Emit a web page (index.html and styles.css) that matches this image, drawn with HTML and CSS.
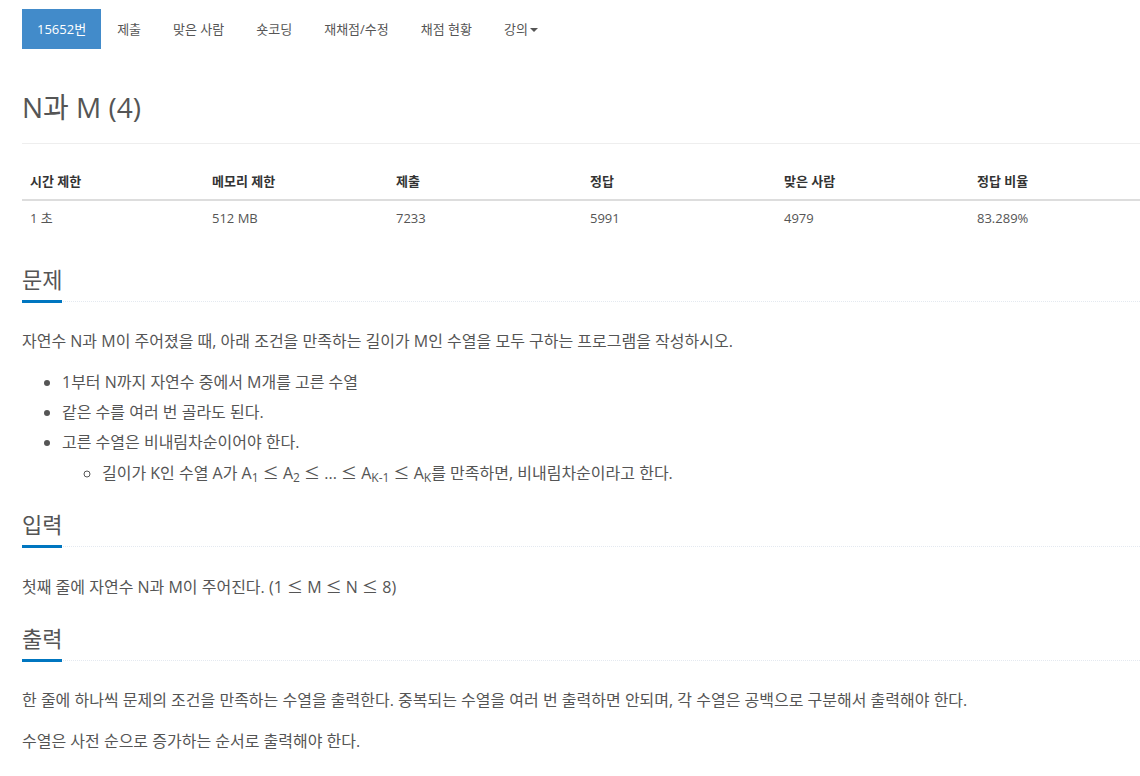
FILE: index.html
```html
<!DOCTYPE html>
<html lang="ko">
<head>
<meta charset="utf-8">
<title>N과 M (4)</title>
<link rel="stylesheet" href="styles.css">
</head>
<body>
<div class="page">
  <ul class="nav">
    <li class="nav-item active">15652번</li>
    <li class="nav-item">제출</li>
    <li class="nav-item">맞은 사람</li>
    <li class="nav-item">숏코딩</li>
    <li class="nav-item">재채점/수정</li>
    <li class="nav-item">채점 현황</li>
    <li class="nav-item">강의<span class="caret"></span></li>
  </ul>

  <h1 class="title">N과 M (4)</h1>
  <hr class="rule">

  <table class="info">
    <colgroup>
      <col class="c1"><col class="c2"><col class="c3"><col class="c4"><col class="c5"><col class="c6">
    </colgroup>
    <thead>
      <tr><th>시간 제한</th><th>메모리 제한</th><th>제출</th><th>정답</th><th>맞은 사람</th><th>정답 비율</th></tr>
    </thead>
    <tbody>
      <tr><td>1 초</td><td>512 MB</td><td>7233</td><td>5991</td><td>4979</td><td>83.289%</td></tr>
    </tbody>
  </table>

  <section class="section first">
    <div class="headline"><h2>문제</h2></div>
    <p>자연수 N과 M이 주어졌을 때, 아래 조건을 만족하는 길이가 M인 수열을 모두 구하는 프로그램을 작성하시오.</p>
    <ul class="list">
      <li>1부터 N까지 자연수 중에서 M개를 고른 수열</li>
      <li>같은 수를 여러 번 골라도 된다.</li>
      <li>고른 수열은 비내림차순이어야 한다.
        <ul class="sublist">
          <li>길이가 K인 수열 A가 A<sub>1</sub> <span class="op">≤</span> A<sub>2</sub> <span class="op">≤</span> ... <span class="op">≤</span> A<sub>K-1</sub> <span class="op">≤</span> A<sub>K</sub>를 만족하면, 비내림차순이라고 한다.</li>
        </ul>
      </li>
    </ul>
  </section>

  <section class="section">
    <div class="headline"><h2>입력</h2></div>
    <p>첫째 줄에 자연수 N과 M이 주어진다. (1 <span class="op">≤</span> M <span class="op">≤</span> N <span class="op">≤</span> 8)</p>
  </section>

  <section class="section">
    <div class="headline"><h2>출력</h2></div>
    <p>한 줄에 하나씩 문제의 조건을 만족하는 수열을 출력한다. 중복되는 수열을 여러 번 출력하면 안되며, 각 수열은 공백으로 구분해서 출력해야 한다.</p>
    <p>수열은 사전 순으로 증가하는 순서로 출력해야 한다.</p>
  </section>
</div>
</body>
</html>
```

FILE: styles.css
```css
html, body {
  margin: 0;
  padding: 0;
  background: #fff;
}

body {
  font-family: "Open Sans", "Noto Sans CJK KR", sans-serif;
  color: #555;
  font-size: 13px;
}

.page {
  padding-left: 22px;
  overflow: hidden;
}

.nav {
  list-style: none;
  margin: 9px 0 0 0;
  padding: 0;
  display: flex;
}

.nav-item {
  height: 40px;
  line-height: 40px;
  padding: 0 16px;
  font-size: 13px;
  color: #555;
  display: flex;
  align-items: center;
}

.nav-item.active {
  background: #428bca;
  color: #fff;
  padding: 0 15px;
}

.caret {
  display: inline-block;
  width: 0;
  height: 0;
  margin-left: 2px;
  margin-top: 2px;
  border-top: 4px solid #555;
  border-left: 4px solid transparent;
  border-right: 4px solid transparent;
}

.title {
  font-size: 28px;
  font-weight: 400;
  line-height: 36px;
  margin: 40px 0 0 0;
  color: #555;
}

.rule {
  border: 0;
  border-top: 1px solid #eee;
  margin: 18px 0 20px 0;
}

.info {
  width: 1118px;
  table-layout: fixed;
  border-collapse: collapse;
  font-size: 13px;
  line-height: 1.42857;
}

.c1 { width: 182px; }
.c2 { width: 184px; }
.c3 { width: 194px; }
.c4 { width: 194px; }
.c5 { width: 193px; }
.c6 { width: 171px; }

.info th {
  text-align: left;
  font-weight: 700;
  color: #333;
  padding: 8px;
  border-bottom: 2px solid #ddd;
}

.info td {
  padding: 8px;
  color: #555;
}

.section {
  padding-top: 11px;
}

.section.first {
  padding-top: 30px;
}

.headline {
  border-bottom: 1px dotted #e4e9f0;
  margin-bottom: 24px;
}

.headline h2 {
  display: inline-block;
  margin: 0 0 -2px 0;
  font-size: 22px;
  font-weight: 400;
  line-height: 28px;
  padding-bottom: 7px;
  border-bottom: 3px solid #0076c0;
  color: #555;
}

.section p {
  font-size: 16px;
  line-height: 30px;
  margin: 0 0 11px 0;
}

.list {
  font-size: 16px;
  line-height: 30px;
  margin: 0 0 11px 0;
  padding-left: 40px;
}

.sublist {
  margin: 0;
  padding-left: 40px;
  list-style-type: circle;
}

.op {
  font-family: "Noto Sans CJK KR", sans-serif;
}

sub {
  font-size: 75%;
  line-height: 0;
  vertical-align: -0.25em;
}
```
